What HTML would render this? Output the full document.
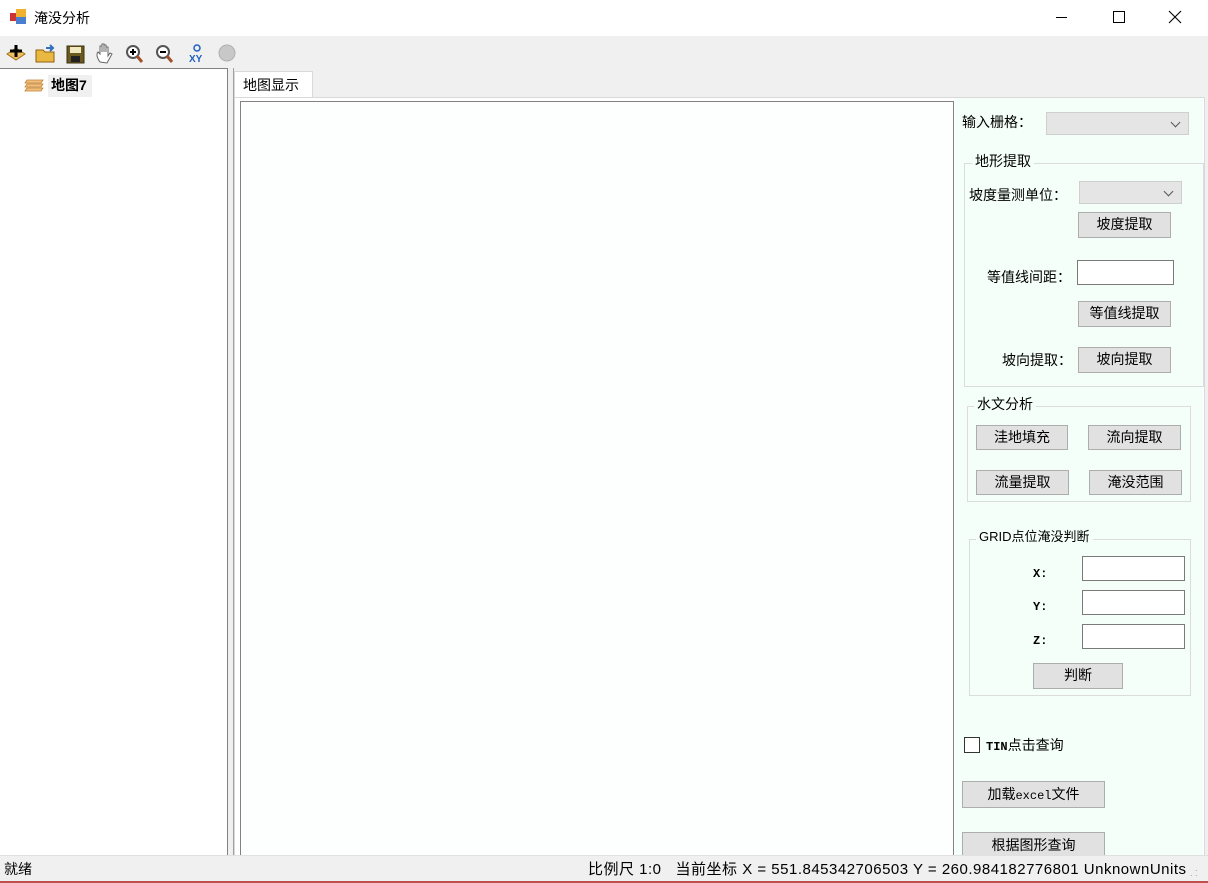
<!DOCTYPE html>
<html><head><meta charset="utf-8"><style>
*{margin:0;padding:0;box-sizing:border-box}
body{width:1208px;height:883px;position:relative;overflow:hidden;background:#f0f0f0;font-family:"Liberation Sans","Noto Sans CJK SC",sans-serif;font-size:14px;color:#000}
.a{position:absolute;white-space:nowrap}
.btn{position:absolute;background:#e1e1e1;border:1px solid #adadad;text-align:center;font-size:14px;line-height:23px}
.tb{position:absolute;background:#fff;border:1px solid #7a7a7a}
.cb{position:absolute;background:#e5e5e5;border:1px solid #cfcfcf}
.cb:after{content:"";position:absolute;right:9px;top:6px;width:6px;height:6px;border-right:1px solid #555;border-bottom:1px solid #555;transform:rotate(45deg)}
.gb{position:absolute;border:1px solid #dcdcdc}
.gl{position:absolute;background:#f5fffa;padding:0 3px;font-size:14px;line-height:16px}
.lb{position:absolute;font-size:14px;line-height:16px;white-space:nowrap}
</style></head><body>
<div class="a" style="left:0;top:0;width:1208px;height:36px;background:#fff"></div>
<svg class="a" style="left:10px;top:9px" width="18" height="16"><rect x="0" y="4" width="6" height="8" fill="#c33"/><rect x="6" y="0" width="10" height="8" fill="#f0b030"/><rect x="6" y="8" width="10" height="7" fill="#4a7fd0"/></svg>
<div class="a" style="left:34px;top:8px;font-size:14px">淹没分析</div>
<div class="a" style="left:1056px;top:17px;width:11px;height:1px;background:#000"></div>
<div class="a" style="left:1113px;top:11px;width:12px;height:12px;border:1px solid #000"></div>
<svg class="a" style="left:1168px;top:10px" width="14" height="14"><path d="M1 1L13 13M13 1L1 13" stroke="#000" stroke-width="1.1"/></svg>
<!-- toolbar -->
<svg class="a" style="left:5px;top:42px" width="240" height="24">
<path d="M2 12L11 6L20 12L11 18Z" fill="#f0c060" stroke="#a07020"/><path d="M11 3V15M5 9H17" stroke="#000" stroke-width="3"/>
<path d="M31 8H38L40 10H49V20H31Z" fill="#e8b840" stroke="#946010"/><path d="M41 6L47 6M45 3L48 6L45 9" stroke="#3070c0" stroke-width="2" fill="none"/>
<rect x="62" y="4" width="17" height="17" fill="#6b5a20" stroke="#3c3010"/><rect x="65" y="5" width="11" height="6" fill="#f0e8c0"/><rect x="66" y="14" width="9" height="6" fill="#222"/>
<path d="M95 20C92 16 91 12 93 10L95 12V4L97 4V10V2L99 2V10V3L101 3V10V5L103 5V14L105 11L107 12L102 21Z" fill="#fff" stroke="#666" stroke-width="1"/>
<circle cx="128" cy="10" r="6" fill="#fff" stroke="#555" stroke-width="2"/><path d="M132 14L137 20" stroke="#a0522d" stroke-width="3"/><path d="M125 10H131M128 7V13" stroke="#000" stroke-width="2"/>
<circle cx="158" cy="10" r="6" fill="#fff" stroke="#555" stroke-width="2"/><path d="M162 14L167 20" stroke="#a0522d" stroke-width="3"/><path d="M155 10H161" stroke="#000" stroke-width="2"/>
<circle cx="192" cy="6" r="3" fill="none" stroke="#2060c0" stroke-width="1.5"/><text x="184" y="20" font-size="10" font-weight="bold" fill="#2060c0" font-family="Liberation Sans">XY</text>
<circle cx="222" cy="11" r="8" fill="#c8c8c8" stroke="#b0b0b0"/>
</svg>
<!-- left panel -->
<div class="a" style="left:0;top:68px;width:228px;height:787px;background:#fff;border-right:1px solid #828282;border-top:1px solid #828282"></div>
<svg class="a" style="left:24px;top:77px" width="20" height="16"><path d="M3 3H19L17 6H1Z M3 7H19L17 10H1Z M3 11H19L17 14H1Z" fill="#f0c080" stroke="#c08030" stroke-width="0.8"/></svg>
<div class="a" style="left:48px;top:75px;width:44px;height:22px;background:#f0f0f0;font-weight:bold;padding-left:3px;line-height:20px">地图7</div>
<div class="a" style="left:233px;top:68px;width:1px;height:787px;background:#a0a0a0"></div>
<!-- tab -->
<div class="a" style="left:234px;top:71px;width:79px;height:27px;background:#fff;border:1px solid #d9d9d9;border-bottom:none;padding:3px 0 0 8px">地图显示</div>
<div class="a" style="left:234px;top:97px;width:971px;height:758px;background:#fff;border:1px solid #d9d9d9;border-bottom:none"></div>
<div class="a" style="left:240px;top:101px;width:714px;height:754px;background:#fcfffe;border:1px solid #828282;border-bottom:none"></div>
<div class="a" style="left:955px;top:98px;width:248px;height:757px;background:#f5fffa"></div>
<!-- right controls -->
<div class="lb" style="left:962px;top:114px">输入栅格：</div>
<div class="cb" style="left:1046px;top:112px;width:143px;height:23px"></div>
<div class="gb" style="left:964px;top:163px;width:240px;height:224px"></div>
<div class="gl" style="left:972px;top:153px">地形提取</div>
<div class="lb" style="left:969px;top:187px">坡度量测单位：</div>
<div class="cb" style="left:1079px;top:181px;width:103px;height:23px"></div>
<div class="btn" style="left:1078px;top:212px;width:93px;height:26px">坡度提取</div>
<div class="lb" style="left:987px;top:269px">等值线间距：</div>
<div class="tb" style="left:1077px;top:260px;width:97px;height:25px"></div>
<div class="btn" style="left:1078px;top:301px;width:93px;height:26px">等值线提取</div>
<div class="lb" style="left:1002px;top:352px">坡向提取：</div>
<div class="btn" style="left:1078px;top:347px;width:93px;height:26px">坡向提取</div>
<div class="gb" style="left:967px;top:406px;width:224px;height:96px"></div>
<div class="gl" style="left:974px;top:396px">水文分析</div>
<div class="btn" style="left:976px;top:425px;width:92px;height:25px">洼地填充</div>
<div class="btn" style="left:1088px;top:425px;width:93px;height:25px">流向提取</div>
<div class="btn" style="left:976px;top:470px;width:93px;height:25px">流量提取</div>
<div class="btn" style="left:1089px;top:470px;width:93px;height:25px">淹没范围</div>
<div class="gb" style="left:969px;top:539px;width:222px;height:157px"></div>
<div class="gl" style="left:976px;top:529px;font-size:13px">GRID点位淹没判断</div>
<div class="lb" style="left:1033px;top:566px;font-size:12px;font-family:'Liberation Mono',monospace;font-weight:bold">X:</div>
<div class="lb" style="left:1033px;top:599px;font-size:12px;font-family:'Liberation Mono',monospace;font-weight:bold">Y:</div>
<div class="lb" style="left:1033px;top:633px;font-size:12px;font-family:'Liberation Mono',monospace;font-weight:bold">Z:</div>
<div class="tb" style="left:1082px;top:556px;width:103px;height:25px"></div>
<div class="tb" style="left:1082px;top:590px;width:103px;height:25px"></div>
<div class="tb" style="left:1082px;top:624px;width:103px;height:25px"></div>
<div class="btn" style="left:1033px;top:663px;width:90px;height:26px">判断</div>
<div class="a" style="left:964px;top:737px;width:16px;height:16px;background:#fff;border:1px solid #333"></div>
<div class="lb" style="left:986px;top:737px"><span style="font-family:'Liberation Mono',monospace;font-size:12px;font-weight:bold">TIN</span>点击查询</div>
<div class="btn" style="left:962px;top:781px;width:143px;height:27px;line-height:25px">加载<span style="font-family:'Liberation Mono',monospace;font-size:12px">excel</span>文件</div>
<div class="btn" style="left:962px;top:832px;width:143px;height:30px;line-height:25px">根据图形查询</div>
<!-- status -->
<div class="a" style="left:0;top:855px;width:1208px;height:26px;background:#f0f0f0;border-top:1px solid #e0e0e0"></div>
<div class="a" style="left:4px;top:859px">就绪</div>
<div class="a" style="left:588px;top:858px;font-size:15px;letter-spacing:0.5px">比例尺 1:0&nbsp;&nbsp;&nbsp;当前坐标 X = 551.845342706503 Y = 260.984182776801 UnknownUnits</div>
<div class="a" style="left:1190px;top:866px;font-size:9px;color:#999;line-height:5px">&nbsp;&nbsp;.<br>. .</div>
<div class="a" style="left:0;top:881px;width:1208px;height:2px;background:#c0504d"></div>
</body></html>
